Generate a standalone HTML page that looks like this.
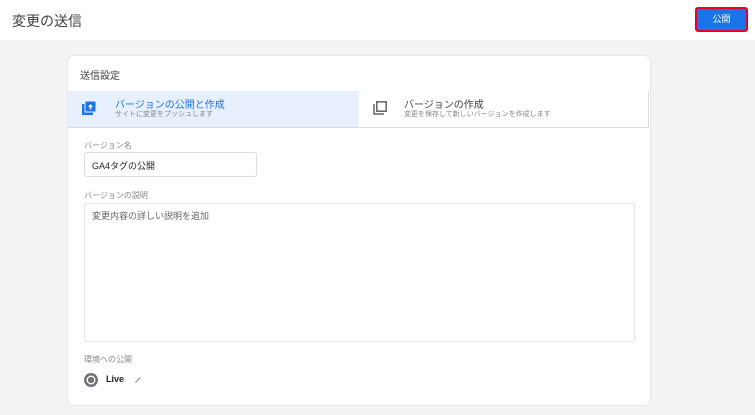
<!DOCTYPE html>
<html><head><meta charset="utf-8"><style>
*{box-sizing:border-box;margin:0;padding:0}
body{width:755px;height:415px;overflow:hidden;background:#f1f3f4;font-family:"Liberation Sans","Noto Sans CJK JP",sans-serif;color:#202124;position:relative}
.hdr{position:absolute;left:0;top:0;width:755px;height:40px;background:#fff}
.ttl{position:absolute;left:12px;top:11px;font-size:14px;color:#3c4043}
.btn{position:absolute;left:695px;top:7px;width:53px;height:25px;background:#1a73e8;border:2px solid #e5002b;border-radius:3px;color:#fff;font-size:9px;text-align:center;line-height:21px}
.card{position:absolute;left:68px;top:56px;width:582px;height:349px;background:#fff;border-radius:5px;box-shadow:0 0 1px rgba(0,0,0,.3)}
.abs{position:absolute}
.lbl{font-size:8px;color:#80868b}
</style></head><body>
<div class="hdr"><div class="ttl">変更の送信</div><div class="btn">公開</div></div>
<div class="card">
<div class="abs" style="left:12px;top:11px;font-size:10px;color:#3c4043">送信設定</div>
<div class="abs" style="left:0;top:35px;width:291px;height:36px;background:#e8f0fe"></div>
<div class="abs" style="left:0;top:71px;width:582px;height:1px;background:#dadce0"></div>
<div class="abs" style="left:580px;top:35px;width:1px;height:36px;background:#dadce0"></div>
<svg class="abs" style="left:14px;top:45px" width="14" height="14" viewBox="0 0 14 14"><rect x="0" y="3" width="11" height="11" fill="#1a73e8"/><rect x="3" y="0" width="11" height="11" fill="#1a73e8" stroke="#e8f0fe" stroke-width="1"/><path d="M8.5 3 L6 6 H7.7 V8.5 H9.3 V6 H11 Z" fill="#fff"/></svg>
<div class="abs" style="left:47px;top:40px;font-size:10px;color:#1a73e8">バージョンの公開と作成</div>
<div class="abs" style="left:47px;top:53px;font-size:7px;color:#80868b">サイトに変更をプッシュします</div>
<svg class="abs" style="left:305px;top:45px" width="14" height="14" viewBox="0 0 14 14"><path d="M1 3 V13 H11" fill="none" stroke="#5f6368" stroke-width="1.5"/><rect x="3.8" y="0.8" width="9.4" height="9.4" fill="none" stroke="#5f6368" stroke-width="1.5"/></svg>
<div class="abs" style="left:336px;top:40px;font-size:10px;color:#3c4043">バージョンの作成</div>
<div class="abs" style="left:336px;top:53px;font-size:7px;color:#80868b">変更を保存して新しいバージョンを作成します</div>
<div class="abs lbl" style="left:16px;top:84px">バージョン名</div>
<div class="abs" style="left:16px;top:96px;width:173px;height:25px;border:1px solid #dadce0;border-radius:3px;font-size:9px;padding:6px 0 0 7px">GA4タグの公開</div>
<div class="abs lbl" style="left:16px;top:134px">バージョンの説明</div>
<div class="abs" style="left:16px;top:147px;width:551px;height:139px;border:1px solid #e3e5e8;border-radius:2px;font-size:9px;color:#5f6368;padding:5px 0 0 7px">変更内容の詳しい説明を追加</div>
<div class="abs lbl" style="left:16px;top:298px">環境への公開</div>
<svg class="abs" style="left:16px;top:317px" width="14" height="14" viewBox="0 0 14 14"><circle cx="7" cy="7" r="7" fill="#6f7377"/><circle cx="7" cy="7" r="3.8" fill="none" stroke="#fff" stroke-width="1.3"/><circle cx="8.5" cy="8" r="1.3" fill="#6f7377"/></svg>
<div class="abs" style="left:38px;top:318px;font-size:9px;font-weight:bold">Live</div>
<svg class="abs" style="left:66px;top:320px" width="8" height="8" viewBox="0 0 8 8"><path d="M1 7 L1.5 5.5 L6 1 L7 2 L2.5 6.5 Z" fill="#9aa0a6"/></svg>
</div>
</body></html>
